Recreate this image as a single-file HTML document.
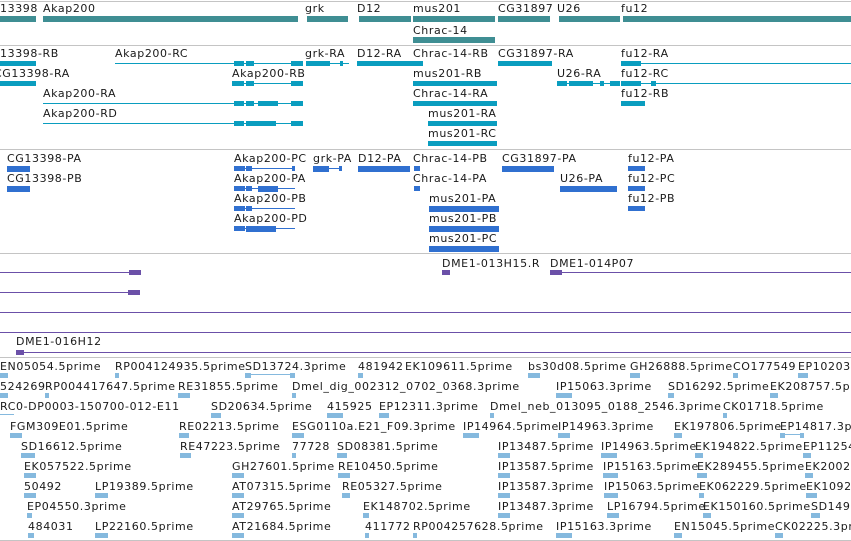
<!DOCTYPE html>
<html><head><meta charset="utf-8">
<style>
html,body{margin:0;padding:0;background:#fff;width:851px;height:541px;overflow:hidden;position:relative}
.t{position:absolute;font-family:"DejaVu Sans","Liberation Sans",sans-serif;font-size:11px;line-height:13px;color:#1a1a1a;white-space:nowrap;letter-spacing:0.6px;margin-top:1px}
.b{position:absolute}
.g{position:absolute;left:0;width:851px;height:1px;background:#c4c4c4}
.tl{background:#3F8E93}
.cy{background:#0A9DBF}
.bl{background:#3070D0}
.pu{background:#6B50A8}
.es{background:#85B9DE}
</style></head><body>
<div class="g" style="top:1px"></div>
<div class="g" style="top:45px"></div>
<div class="g" style="top:149px"></div>
<div class="g" style="top:253px"></div>
<div class="g" style="top:357px"></div>
<div class="g" style="top:540px"></div>

<div class="t" style="left:0;top:1px">13398</div>
<div class="t" style="left:43px;top:1px">Akap200</div>
<div class="t" style="left:305px;top:1px">grk</div>
<div class="t" style="left:357px;top:1px">D12</div>
<div class="t" style="left:413px;top:1px">mus201</div>
<div class="t" style="left:498px;top:1px">CG31897</div>
<div class="t" style="left:557px;top:1px">U26</div>
<div class="t" style="left:621px;top:1px">fu12</div>
<div class="b tl" style="left:0;top:16px;width:36px;height:6px"></div>
<div class="b tl" style="left:43px;top:16px;width:255px;height:6px"></div>
<div class="b tl" style="left:307px;top:16px;width:41px;height:6px"></div>
<div class="b tl" style="left:359px;top:16px;width:52px;height:6px"></div>
<div class="b tl" style="left:413px;top:16px;width:82px;height:6px"></div>
<div class="b tl" style="left:498px;top:16px;width:52px;height:6px"></div>
<div class="b tl" style="left:559px;top:16px;width:61px;height:6px"></div>
<div class="b tl" style="left:623px;top:16px;width:228px;height:6px"></div>
<div class="t" style="left:413px;top:23px">Chrac-14</div>
<div class="b tl" style="left:413px;top:37px;width:82px;height:6px"></div>

<div class="t" style="left:0;top:46px">13398-RB</div>
<div class="t" style="left:115px;top:46px">Akap200-RC</div>
<div class="t" style="left:305px;top:46px">grk-RA</div>
<div class="t" style="left:357px;top:46px">D12-RA</div>
<div class="t" style="left:413px;top:46px">Chrac-14-RB</div>
<div class="t" style="left:498px;top:46px">CG31897-RA</div>
<div class="t" style="left:621px;top:46px">fu12-RA</div>
<div class="b cy" style="left:0;top:61px;width:36px;height:5px"></div>
<div class="b cy" style="left:115px;top:63px;width:188px;height:1px"></div>
<div class="b cy" style="left:234px;top:61px;width:10px;height:5px"></div>
<div class="b cy" style="left:246px;top:61px;width:8px;height:5px"></div>
<div class="b cy" style="left:291px;top:61px;width:12px;height:5px"></div>
<div class="b cy" style="left:306px;top:61px;width:24px;height:5px"></div>
<div class="b cy" style="left:306px;top:63px;width:43px;height:1px"></div>
<div class="b cy" style="left:340px;top:61px;width:3px;height:5px"></div>
<div class="b cy" style="left:357px;top:61px;width:66px;height:5px"></div>
<div class="b cy" style="left:498px;top:61px;width:54px;height:5px"></div>
<div class="b cy" style="left:621px;top:61px;width:20px;height:5px"></div>
<div class="b cy" style="left:640px;top:63px;width:211px;height:1px"></div>

<div class="t" style="left:-6px;top:66px">CG13398-RA</div>
<div class="t" style="left:232px;top:66px">Akap200-RB</div>
<div class="t" style="left:413px;top:66px">mus201-RB</div>
<div class="t" style="left:557px;top:66px">U26-RA</div>
<div class="t" style="left:621px;top:66px">fu12-RC</div>
<div class="b cy" style="left:0;top:81px;width:36px;height:5px"></div>
<div class="b cy" style="left:232px;top:83px;width:71px;height:1px"></div>
<div class="b cy" style="left:232px;top:81px;width:12px;height:5px"></div>
<div class="b cy" style="left:246px;top:81px;width:8px;height:5px"></div>
<div class="b cy" style="left:291px;top:81px;width:12px;height:5px"></div>
<div class="b cy" style="left:413px;top:81px;width:84px;height:5px"></div>
<div class="b cy" style="left:557px;top:83px;width:63px;height:1px"></div>
<div class="b cy" style="left:557px;top:81px;width:10px;height:5px"></div>
<div class="b cy" style="left:569px;top:81px;width:24px;height:5px"></div>
<div class="b cy" style="left:600px;top:81px;width:4px;height:5px"></div>
<div class="b cy" style="left:610px;top:81px;width:10px;height:5px"></div>
<div class="b cy" style="left:621px;top:81px;width:20px;height:5px"></div>
<div class="b cy" style="left:627px;top:83px;width:224px;height:1px"></div>
<div class="b cy" style="left:651px;top:81px;width:5px;height:5px"></div>

<div class="t" style="left:43px;top:86px">Akap200-RA</div>
<div class="t" style="left:413px;top:86px">Chrac-14-RA</div>
<div class="t" style="left:621px;top:86px">fu12-RB</div>
<div class="b cy" style="left:43px;top:103px;width:260px;height:1px"></div>
<div class="b cy" style="left:234px;top:101px;width:10px;height:5px"></div>
<div class="b cy" style="left:246px;top:101px;width:8px;height:5px"></div>
<div class="b cy" style="left:258px;top:101px;width:20px;height:5px"></div>
<div class="b cy" style="left:291px;top:101px;width:12px;height:5px"></div>
<div class="b cy" style="left:413px;top:101px;width:84px;height:5px"></div>
<div class="b cy" style="left:621px;top:101px;width:24px;height:5px"></div>

<div class="t" style="left:43px;top:106px">Akap200-RD</div>
<div class="t" style="left:428px;top:106px">mus201-RA</div>
<div class="b cy" style="left:43px;top:123px;width:260px;height:1px"></div>
<div class="b cy" style="left:234px;top:121px;width:10px;height:5px"></div>
<div class="b cy" style="left:246px;top:121px;width:30px;height:5px"></div>
<div class="b cy" style="left:291px;top:121px;width:12px;height:5px"></div>
<div class="b cy" style="left:428px;top:121px;width:69px;height:5px"></div>
<div class="t" style="left:428px;top:126px">mus201-RC</div>
<div class="b cy" style="left:428px;top:141px;width:69px;height:5px"></div>

<div class="t" style="left:7px;top:151px">CG13398-PA</div>
<div class="t" style="left:234px;top:151px">Akap200-PC</div>
<div class="t" style="left:313px;top:151px">grk-PA</div>
<div class="t" style="left:358px;top:151px">D12-PA</div>
<div class="t" style="left:413px;top:151px">Chrac-14-PB</div>
<div class="t" style="left:502px;top:151px">CG31897-PA</div>
<div class="t" style="left:628px;top:151px">fu12-PA</div>
<div class="b bl" style="left:7px;top:166px;width:23px;height:6px"></div>
<div class="b bl" style="left:234px;top:168px;width:61px;height:1px"></div>
<div class="b bl" style="left:234px;top:166px;width:11px;height:5px"></div>
<div class="b bl" style="left:246px;top:166px;width:6px;height:5px"></div>
<div class="b bl" style="left:292px;top:166px;width:3px;height:5px"></div>
<div class="b bl" style="left:313px;top:166px;width:16px;height:6px"></div>
<div class="b bl" style="left:313px;top:168px;width:29px;height:1px"></div>
<div class="b bl" style="left:339px;top:166px;width:3px;height:5px"></div>
<div class="b bl" style="left:358px;top:166px;width:52px;height:6px"></div>
<div class="b bl" style="left:414px;top:166px;width:6px;height:5px"></div>
<div class="b bl" style="left:502px;top:166px;width:52px;height:6px"></div>
<div class="b bl" style="left:628px;top:166px;width:17px;height:5px"></div>

<div class="t" style="left:7px;top:171px">CG13398-PB</div>
<div class="t" style="left:234px;top:171px">Akap200-PA</div>
<div class="t" style="left:413px;top:171px">Chrac-14-PA</div>
<div class="t" style="left:560px;top:171px">U26-PA</div>
<div class="t" style="left:628px;top:171px">fu12-PC</div>
<div class="b bl" style="left:7px;top:186px;width:23px;height:6px"></div>
<div class="b bl" style="left:234px;top:188px;width:61px;height:1px"></div>
<div class="b bl" style="left:234px;top:186px;width:11px;height:5px"></div>
<div class="b bl" style="left:246px;top:186px;width:6px;height:5px"></div>
<div class="b bl" style="left:258px;top:186px;width:20px;height:6px"></div>
<div class="b bl" style="left:414px;top:186px;width:6px;height:5px"></div>
<div class="b bl" style="left:560px;top:186px;width:57px;height:6px"></div>
<div class="b bl" style="left:628px;top:186px;width:17px;height:5px"></div>

<div class="t" style="left:234px;top:191px">Akap200-PB</div>
<div class="t" style="left:429px;top:191px">mus201-PA</div>
<div class="t" style="left:628px;top:191px">fu12-PB</div>
<div class="b bl" style="left:234px;top:208px;width:61px;height:1px"></div>
<div class="b bl" style="left:234px;top:206px;width:11px;height:5px"></div>
<div class="b bl" style="left:246px;top:206px;width:6px;height:5px"></div>
<div class="b bl" style="left:429px;top:206px;width:70px;height:6px"></div>
<div class="b bl" style="left:628px;top:206px;width:17px;height:5px"></div>

<div class="t" style="left:234px;top:211px">Akap200-PD</div>
<div class="t" style="left:429px;top:211px">mus201-PB</div>
<div class="b bl" style="left:234px;top:228px;width:61px;height:1px"></div>
<div class="b bl" style="left:234px;top:226px;width:11px;height:5px"></div>
<div class="b bl" style="left:246px;top:226px;width:30px;height:6px"></div>
<div class="b bl" style="left:429px;top:226px;width:70px;height:6px"></div>
<div class="t" style="left:429px;top:231px">mus201-PC</div>
<div class="b bl" style="left:429px;top:246px;width:70px;height:6px"></div>

<div class="b pu" style="left:0;top:272px;width:141px;height:1px"></div>
<div class="b pu" style="left:129px;top:270px;width:12px;height:5px"></div>
<div class="b pu" style="left:0;top:292px;width:140px;height:1px"></div>
<div class="b pu" style="left:128px;top:290px;width:12px;height:5px"></div>
<div class="b pu" style="left:0;top:312px;width:851px;height:1px"></div>
<div class="b pu" style="left:0;top:332px;width:851px;height:1px"></div>
<div class="t" style="left:442px;top:256px">DME1-013H15.R</div>
<div class="t" style="left:550px;top:256px">DME1-014P07</div>
<div class="b pu" style="left:442px;top:270px;width:8px;height:5px"></div>
<div class="b pu" style="left:550px;top:270px;width:12px;height:5px"></div>
<div class="b pu" style="left:550px;top:272px;width:301px;height:1px"></div>
<div class="t" style="left:16px;top:334px">DME1-016H12</div>
<div class="b pu" style="left:16px;top:350px;width:8px;height:5px"></div>
<div class="b pu" style="left:16px;top:352px;width:835px;height:1px"></div>

<div class="t" style="left:0;top:359px">EN05054.5prime</div>
<div class="t" style="left:115px;top:359px">RP004124935.5prime</div>
<div class="t" style="left:245px;top:359px">SD13724.3prime</div>
<div class="t" style="left:358px;top:359px">481942</div>
<div class="t" style="left:405px;top:359px">EK109611.5prime</div>
<div class="t" style="left:528px;top:359px">bs30d08.5prime</div>
<div class="t" style="left:630px;top:359px">GH26888.5prime</div>
<div class="t" style="left:733px;top:359px">CO177549</div>
<div class="t" style="left:798px;top:359px">EP10203</div>

<div class="t" style="left:0;top:379px">524269</div>
<div class="t" style="left:45px;top:379px">RP004417647.5prime</div>
<div class="t" style="left:178px;top:379px">RE31855.5prime</div>
<div class="t" style="left:292px;top:379px">Dmel_dig_002312_0702_0368.3prime</div>
<div class="t" style="left:556px;top:379px">IP15063.3prime</div>
<div class="t" style="left:668px;top:379px">SD16292.5prime</div>
<div class="t" style="left:770px;top:379px">EK208757.5prime</div>

<div class="t" style="left:0;top:399px">RC0-DP0003-150700-012-E11</div>
<div class="t" style="left:211px;top:399px">SD20634.5prime</div>
<div class="t" style="left:327px;top:399px">415925</div>
<div class="t" style="left:379px;top:399px">EP12311.3prime</div>
<div class="t" style="left:490px;top:399px">Dmel_neb_013095_0188_2546.3prime</div>
<div class="t" style="left:723px;top:399px">CK01718.5prime</div>

<div class="t" style="left:10px;top:419px">FGM309E01.5prime</div>
<div class="t" style="left:179px;top:419px">RE02213.5prime</div>
<div class="t" style="left:292px;top:419px">ESG0110a.E21_F09.3prime</div>
<div class="t" style="left:463px;top:419px">IP14964.5prime</div>
<div class="t" style="left:558px;top:419px">IP14963.3prime</div>
<div class="t" style="left:674px;top:419px">EK197806.5prime</div>
<div class="t" style="left:780px;top:419px">EP14817.3prime</div>

<div class="t" style="left:21px;top:439px">SD16612.5prime</div>
<div class="t" style="left:180px;top:439px">RE47223.5prime</div>
<div class="t" style="left:292px;top:439px">77728</div>
<div class="t" style="left:337px;top:439px">SD08381.5prime</div>
<div class="t" style="left:498px;top:439px">IP13487.5prime</div>
<div class="t" style="left:601px;top:439px">IP14963.5prime</div>
<div class="t" style="left:695px;top:439px">EK194822.5prime</div>
<div class="t" style="left:803px;top:439px">EP11254</div>

<div class="t" style="left:24px;top:459px">EK057522.5prime</div>
<div class="t" style="left:232px;top:459px">GH27601.5prime</div>
<div class="t" style="left:338px;top:459px">RE10450.5prime</div>
<div class="t" style="left:498px;top:459px">IP13587.5prime</div>
<div class="t" style="left:603px;top:459px">IP15163.5prime</div>
<div class="t" style="left:697px;top:459px">EK289455.5prime</div>
<div class="t" style="left:805px;top:459px">EK2002</div>

<div class="t" style="left:24px;top:479px">50492</div>
<div class="t" style="left:95px;top:479px">LP19389.5prime</div>
<div class="t" style="left:232px;top:479px">AT07315.5prime</div>
<div class="t" style="left:342px;top:479px">RE05327.5prime</div>
<div class="t" style="left:498px;top:479px">IP13587.3prime</div>
<div class="t" style="left:604px;top:479px">IP15063.5prime</div>
<div class="t" style="left:699px;top:479px">EK062229.5prime</div>
<div class="t" style="left:806px;top:479px">EK1092</div>

<div class="t" style="left:27px;top:499px">EP04550.3prime</div>
<div class="t" style="left:232px;top:499px">AT29765.5prime</div>
<div class="t" style="left:363px;top:499px">EK148702.5prime</div>
<div class="t" style="left:498px;top:499px">IP13487.3prime</div>
<div class="t" style="left:607px;top:499px">LP16794.5prime</div>
<div class="t" style="left:703px;top:499px">EK150160.5prime</div>
<div class="t" style="left:811px;top:499px">SD149</div>

<div class="t" style="left:28px;top:519px">484031</div>
<div class="t" style="left:95px;top:519px">LP22160.5prime</div>
<div class="t" style="left:232px;top:519px">AT21684.5prime</div>
<div class="t" style="left:365px;top:519px">411772</div>
<div class="t" style="left:413px;top:519px">RP004257628.5prime</div>
<div class="t" style="left:556px;top:519px">IP15163.3prime</div>
<div class="t" style="left:674px;top:519px">EN15045.5prime</div>
<div class="t" style="left:775px;top:519px">CK02225.3prime</div>

<div class="b es" style="left:0;top:373px;width:8px;height:5px"></div>
<div class="b es" style="left:115px;top:373px;width:4px;height:5px"></div>
<div class="b es" style="left:245px;top:374px;width:50px;height:1px"></div>
<div class="b es" style="left:245px;top:373px;width:6px;height:5px"></div>
<div class="b es" style="left:290px;top:373px;width:5px;height:5px"></div>
<div class="b es" style="left:358px;top:373px;width:5px;height:5px"></div>
<div class="b es" style="left:528px;top:373px;width:12px;height:5px"></div>
<div class="b es" style="left:630px;top:373px;width:10px;height:5px"></div>
<div class="b es" style="left:733px;top:373px;width:5px;height:5px"></div>
<div class="b es" style="left:798px;top:373px;width:10px;height:5px"></div>

<div class="b es" style="left:0;top:393px;width:8px;height:5px"></div>
<div class="b es" style="left:45px;top:393px;width:4px;height:5px"></div>
<div class="b es" style="left:178px;top:393px;width:12px;height:5px"></div>
<div class="b es" style="left:292px;top:393px;width:4px;height:5px"></div>
<div class="b es" style="left:556px;top:393px;width:16px;height:5px"></div>
<div class="b es" style="left:668px;top:393px;width:6px;height:5px"></div>
<div class="b es" style="left:770px;top:393px;width:8px;height:5px"></div>

<div class="b es" style="left:0;top:414px;width:14px;height:1px"></div>
<div class="b es" style="left:211px;top:413px;width:10px;height:5px"></div>
<div class="b es" style="left:327px;top:413px;width:16px;height:5px"></div>
<div class="b es" style="left:379px;top:413px;width:10px;height:5px"></div>
<div class="b es" style="left:490px;top:413px;width:4px;height:5px"></div>
<div class="b es" style="left:723px;top:413px;width:4px;height:5px"></div>

<div class="b es" style="left:10px;top:433px;width:12px;height:5px"></div>
<div class="b es" style="left:179px;top:433px;width:10px;height:5px"></div>
<div class="b es" style="left:292px;top:433px;width:12px;height:5px"></div>
<div class="b es" style="left:463px;top:433px;width:16px;height:5px"></div>
<div class="b es" style="left:558px;top:433px;width:12px;height:5px"></div>
<div class="b es" style="left:674px;top:433px;width:8px;height:5px"></div>
<div class="b es" style="left:780px;top:434px;width:24px;height:1px"></div>
<div class="b es" style="left:780px;top:433px;width:5px;height:5px"></div>
<div class="b es" style="left:800px;top:433px;width:4px;height:5px"></div>

<div class="b es" style="left:21px;top:453px;width:14px;height:5px"></div>
<div class="b es" style="left:180px;top:453px;width:11px;height:5px"></div>
<div class="b es" style="left:292px;top:453px;width:4px;height:5px"></div>
<div class="b es" style="left:337px;top:453px;width:10px;height:5px"></div>
<div class="b es" style="left:498px;top:453px;width:12px;height:5px"></div>
<div class="b es" style="left:601px;top:453px;width:16px;height:5px"></div>
<div class="b es" style="left:695px;top:453px;width:8px;height:5px"></div>
<div class="b es" style="left:803px;top:453px;width:8px;height:5px"></div>

<div class="b es" style="left:24px;top:473px;width:12px;height:5px"></div>
<div class="b es" style="left:232px;top:473px;width:12px;height:5px"></div>
<div class="b es" style="left:338px;top:473px;width:12px;height:5px"></div>
<div class="b es" style="left:498px;top:473px;width:12px;height:5px"></div>
<div class="b es" style="left:603px;top:473px;width:15px;height:5px"></div>
<div class="b es" style="left:697px;top:473px;width:10px;height:5px"></div>
<div class="b es" style="left:805px;top:473px;width:8px;height:5px"></div>

<div class="b es" style="left:24px;top:493px;width:12px;height:5px"></div>
<div class="b es" style="left:95px;top:493px;width:13px;height:5px"></div>
<div class="b es" style="left:232px;top:493px;width:12px;height:5px"></div>
<div class="b es" style="left:342px;top:493px;width:8px;height:5px"></div>
<div class="b es" style="left:498px;top:493px;width:12px;height:5px"></div>
<div class="b es" style="left:604px;top:493px;width:14px;height:5px"></div>
<div class="b es" style="left:699px;top:493px;width:5px;height:5px"></div>
<div class="b es" style="left:806px;top:493px;width:11px;height:5px"></div>

<div class="b es" style="left:27px;top:513px;width:5px;height:5px"></div>
<div class="b es" style="left:232px;top:513px;width:12px;height:5px"></div>
<div class="b es" style="left:363px;top:513px;width:6px;height:5px"></div>
<div class="b es" style="left:498px;top:513px;width:12px;height:5px"></div>
<div class="b es" style="left:607px;top:513px;width:12px;height:5px"></div>
<div class="b es" style="left:703px;top:513px;width:8px;height:5px"></div>
<div class="b es" style="left:811px;top:513px;width:9px;height:5px"></div>

<div class="b es" style="left:28px;top:533px;width:6px;height:5px"></div>
<div class="b es" style="left:95px;top:533px;width:13px;height:5px"></div>
<div class="b es" style="left:232px;top:533px;width:12px;height:5px"></div>
<div class="b es" style="left:365px;top:533px;width:4px;height:5px"></div>
<div class="b es" style="left:413px;top:533px;width:4px;height:5px"></div>
<div class="b es" style="left:556px;top:533px;width:16px;height:5px"></div>
<div class="b es" style="left:674px;top:533px;width:8px;height:5px"></div>
<div class="b es" style="left:775px;top:533px;width:8px;height:5px"></div>
</body></html>
